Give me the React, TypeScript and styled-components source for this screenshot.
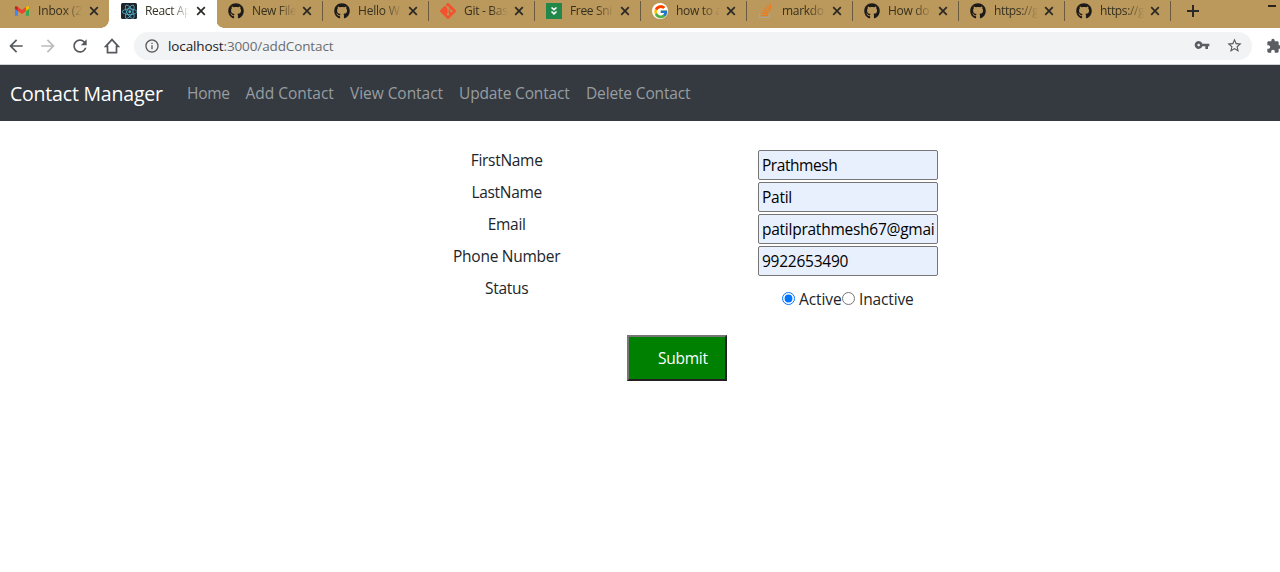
import React from "react";
import styled, { createGlobalStyle } from "styled-components";
import { FaGithub } from "react-icons/fa";
import { SiReact, SiGit } from "react-icons/si";
import { FcGoogle } from "react-icons/fc";
import { MdVpnKey, MdStarBorder, MdExtension, MdArrowBack, MdArrowForward, MdRefresh, MdOutlineInfo } from "react-icons/md";

const GlobalStyle = createGlobalStyle`
  * { box-sizing: border-box; }
  html, body { margin: 0; background: #fff; overflow: hidden; }
  body { font-family: "Open Sans", "Noto Sans", sans-serif; font-size: 15.5px; color: #212529; }
`;

const Page = styled.div`
  width: 1280px;
  height: 572px;
  overflow: hidden;
  background: #fff;
`;

const TabStrip = styled.div`
  display: flex;
  height: 28px;
  padding-left: 2px;
  background: #bb985c;
`;

const TabItem = styled.div<{ $active?: boolean; $wide?: boolean }>`
  position: relative;
  display: flex;
  flex: none;
  align-items: center;
  width: ${(p) => (p.$wide ? 107 : 106)}px;
  height: 28px;
  padding: 0 0 6px 12px;
  background: ${(p) => (p.$active ? "#fff" : "transparent")};
  &::before, &::after {
    content: "";
    display: ${(p) => (p.$active ? "block" : "none")};
    position: absolute;
    bottom: 0;
    width: 8px;
    height: 8px;
  }
  &::before { left: -8px; background: radial-gradient(circle at 0 0, transparent 7.5px, #fff 8px); }
  &::after { right: -8px; background: radial-gradient(circle at 100% 0, transparent 7.5px, #fff 8px); }
  box-shadow: ${(p) => (p.$active ? "1px 0 #fff" : "none")};
`;

const TabDivider = styled.i`
  position: absolute;
  right: -1px;
  top: 1px;
  width: 1px;
  height: 20px;
  background: #6a5a3f;
`;

const Favicon = styled.span`
  display: flex;
  width: 16px;
  height: 16px;
  margin-right: 8px;
  svg { display: block; }
`;

const TabTitle = styled.span<{ $spacing: number; $wide?: boolean }>`
  width: ${(p) => (p.$wide ? 48 : 47)}px;
  white-space: nowrap;
  font-size: 12px;
  line-height: 16px;
  letter-spacing: ${(p) => p.$spacing}px;
  color: #35301f;
  mask-image: linear-gradient(to right, #000 26px, transparent 44px);
`;

const CloseIcon = styled.svg`
  display: block;
  margin-left: 3px;
`;

const NewTab = styled.div`
  padding: 5px 0 0 17px;
  svg { display: block; }
`;

const Minimise = styled.i`
  width: 8px;
  height: 2px;
  margin: 5px 4px 0 auto;
  background: #292318;
`;

const Toolbar = styled.div`
  display: flex;
  align-items: center;
  height: 37px;
  padding: 0 0 1px 6px;
  border-bottom: 1px solid #d2d3d4;
  background: #fff;
  color: #5a5d61;
`;

const ToolButton = styled.span<{ $muted?: boolean }>`
  display: flex;
  flex: none;
  width: 20px;
  height: 20px;
  margin-right: 12px;
  color: ${(p) => (p.$muted ? "#babcbe" : "#55585c")};
`;

const AddressBar = styled.div`
  display: flex;
  flex: none;
  align-items: center;
  width: 1118px;
  height: 28px;
  padding: 0 9px 0 10px;
  border-radius: 14px;
  background: #f1f3f4;
`;

const Address = styled.span`
  flex: 1;
  margin-left: 8px;
  font-size: 13.5px;
  letter-spacing: -0.12px;
  color: #6a6d71;
  b { font-weight: 400; color: #202124; }
`;

const AddressIcons = styled.span`
  display: flex;
  gap: 16px;
`;

const Extension = styled.span`
  display: flex;
  flex: none;
  margin-left: 14px;
`;

const Navbar = styled.nav`
  display: flex;
  align-items: center;
  height: 56px;
  padding-left: 10px;
  background: #343a40;
`;

const Brand = styled.a`
  width: 169px;
  padding-top: 1px;
  font-size: 19.5px;
  letter-spacing: -0.2px;
  line-height: 30px;
  color: #fff;
  white-space: nowrap;
`;

const NavLink = styled.a<{ $w: number; $spacing: number }>`
  width: ${(p) => p.$w}px;
  padding: 0 0 0 8px;
  letter-spacing: ${(p) => p.$spacing}px;
  line-height: 24px;
  color: #999da0;
  white-space: nowrap;
`;

const Form = styled.form`
  display: grid;
  grid-template-columns: 341.33px 341.33px;
  padding: 28px 0 0 336px;
`;

const Column = styled.div`
  display: flex;
  flex-direction: column;
  align-items: center;
`;

const Label = styled.label<{ $spacing: number }>`
  height: 24px;
  margin-bottom: 8px;
  line-height: 22px;
  letter-spacing: ${(p) => p.$spacing}px;
`;

const Input = styled.input<{ $spacing: number }>`
  width: 180px;
  height: 30px;
  margin: 1px 0;
  padding: 1px 3px;
  border: 1px solid #767676;
  border-radius: 2px;
  outline: none;
  background: #e8f0fe;
  color: #000;
  font: inherit;
  letter-spacing: ${(p) => p.$spacing}px;
`;

const RadioRow = styled.div`
  display: flex;
  align-items: center;
  width: 132px;
  height: 24px;
  margin-top: 10px;
  white-space: nowrap;
`;

const Radio = styled.input`
  flex: none;
  width: 13px;
  height: 13px;
  margin: 0 4px 2px 0;
`;

const RadioText = styled.span<{ $w: number; $spacing: number }>`
  flex: none;
  width: ${(p) => p.$w}px;
  letter-spacing: ${(p) => p.$spacing}px;
`;

const Submit = styled.button`
  display: block;
  width: 100px;
  height: 46px;
  margin: 24px 0 0 627px;
  padding: 0 0 0 29px;
  border: 2px solid;
  border-color: #767676 #212121 #212121 #767676;
  background: #008000;
  color: #fff;
  font: inherit;
  letter-spacing: -0.25px;
  text-align: left;
`;

const GmailIcon = () => (
  <svg width="16" height="16" viewBox="0 0 16 16">
    <path d="M.9 4.500v8.300h3V7z" fill="#4285f4" />
    <path d="M12 7v5.800h3V4.500z" fill="#34a853" />
    <path d="M3.900 4.100v4L8 11l4-3v-4L8 7z" fill="#ea4335" />
    <path d="M.9 4.200v1.600l3 2.300v-4l-.9-.6C2 2.800.9 3.200.9 4.200z" fill="#c5221f" />
    <path d="M12 4.100v4l3-2.300V4.200c0-1-1.100-1.400-2.100-.7z" fill="#fbbc04" />
  </svg>
);

const ReactIcon = () => (
  <svg width="16" height="16" viewBox="0 0 16 16">
    <rect width="16" height="16" rx="1.5" fill="#20232a" />
    <SiReact x="1" y="1" width="14" height="14" color="#53b8d3" />
  </svg>
);

const SnippetIcon = () => (
  <svg width="16" height="16" viewBox="0 0 16 16">
    <rect width="16" height="16" fill="#22884a" />
    <path d="M5.500 4.500 8 6.700l2.500-2.200M5.500 8.500 8 10.900l2.500-2.400" fill="none" stroke="#fff" strokeWidth="1.600" />
  </svg>
);

const GoogleIcon = () => (
  <svg width="16" height="16" viewBox="0 0 16 16">
    <circle cx="8" cy="8" r="8" fill="#fff" />
    <FcGoogle x="1" y="1" width="14" height="14" />
  </svg>
);

const StackIcon = () => (
  <svg width="16" height="16" viewBox="0 0 16 16" fill="none">
    <path d="M1.500 10.500v4h10v-4" stroke="#a8a49a" strokeWidth="1.200" />
    <path d="M3.300 12.500h6.400M3.400 10l6.400 1.100M4.300 7.300l5.900 2.600M6.200 4.600l4.900 4M8.800 2.300l3.300 5M12 .500l.9 5.600" stroke="#ee7a1c" strokeWidth="1.150" />
  </svg>
);

const HomeIcon = () => (
  <svg width="20" height="20" viewBox="0 0 20 20" fill="none" stroke="currentColor" strokeWidth="1.700">
    <path d="M3.700 10.400 10 3.600l6.300 6.800h-1.800v6.200h-9v-6.200z" />
  </svg>
);

const Octocat = <FaGithub size={16} color="#1c1b1a" />;

const tabs = [
  { title: "Inbox (2", icon: <GmailIcon />, spacing: -0.15 },
  { title: "React Ap", icon: <ReactIcon />, spacing: -0.35, active: true },
  { title: "New File", icon: Octocat, spacing: -0.35, line: true },
  { title: "Hello W", icon: Octocat, spacing: -0.2, line: true },
  { title: "Git - Bas", icon: <SiGit size={16} color="#f4512c" />, spacing: -0.3, line: true },
  { title: "Free Sni", icon: <SnippetIcon />, spacing: -0.35, line: true },
  { title: "how to a", icon: <GoogleIcon />, spacing: -0.3, line: true },
  { title: "markdo", icon: <StackIcon />, spacing: -0.3, line: true },
  { title: "How do", icon: Octocat, spacing: -0.3, line: true },
  { title: "https://g", icon: Octocat, spacing: -0.35, line: true },
  { title: "https://g", icon: Octocat, spacing: -0.35, line: true },
];

export default function App() {
  return (
    <Page>
      <GlobalStyle />
      <TabStrip>
        {tabs.map((t, i) => (
          <TabItem key={i} $active={t.active} $wide={i < 2}>
            <Favicon>{t.icon}</Favicon>
            <TabTitle $spacing={t.spacing} $wide={i < 2}>{t.title}</TabTitle>
            <CloseIcon width="10" height="10" viewBox="0 0 10 10">
              <path d="M1.200 1.200l7.600 7.600M8.800 1.200l-7.600 7.600" stroke="#2b2925" strokeWidth="1.700" />
            </CloseIcon>
            {t.line && <TabDivider />}
          </TabItem>
        ))}
        <NewTab>
          <svg width="12" height="12" viewBox="0 0 12 12">
            <path d="M6 0v12M0 6h12" stroke="#2b2925" strokeWidth="2" />
          </svg>
        </NewTab>
        <Minimise />
      </TabStrip>
      <Toolbar>
        <ToolButton><MdArrowBack size={20} /></ToolButton>
        <ToolButton $muted><MdArrowForward size={20} /></ToolButton>
        <ToolButton><MdRefresh size={20} /></ToolButton>
        <ToolButton><HomeIcon /></ToolButton>
        <AddressBar>
          <MdOutlineInfo size={16} />
          <Address><b>localhost</b>:3000/addContact</Address>
          <AddressIcons>
            <MdVpnKey size={16} />
            <MdStarBorder size={17} />
          </AddressIcons>
        </AddressBar>
        <Extension><MdExtension size={16} /></Extension>
      </Toolbar>
      <Navbar>
        <Brand>Contact Manager</Brand>
        <NavLink $w={58.500} $spacing={-0.3}>Home</NavLink>
        <NavLink $w={104.500} $spacing={-0.01}>Add Contact</NavLink>
        <NavLink $w={109} $spacing={-0.05}>View Contact</NavLink>
        <NavLink $w={127} $spacing={-0.15}>Update Contact</NavLink>
        <NavLink $w={120} $spacing={-0.15}>Delete Contact</NavLink>
      </Navbar>
      <Form>
        <Column>
          <Label $spacing={-0.3}>FirstName</Label>
          <Label $spacing={-0.3}>LastName</Label>
          <Label $spacing={-0.3}>Email</Label>
          <Label $spacing={-0.27}>Phone Number</Label>
          <Label $spacing={-0.3}>Status</Label>
        </Column>
        <Column>
          <Input $spacing={-0.45} defaultValue="Prathmesh" />
          <Input $spacing={-0.25} defaultValue="Patil" />
          <Input $spacing={-0.25} defaultValue="patilprathmesh67@gmail.com" />
          <Input $spacing={-0.25} defaultValue="9922653490" />
          <RadioRow>
            <Radio type="radio" name="status" defaultChecked />
            <RadioText $w={43} $spacing={-0.1}>Active</RadioText>
            <Radio type="radio" name="status" />
            <RadioText $w={54} $spacing={-0.15}>Inactive</RadioText>
          </RadioRow>
        </Column>
      </Form>
      <Submit type="button">Submit</Submit>
    </Page>
  );
}
